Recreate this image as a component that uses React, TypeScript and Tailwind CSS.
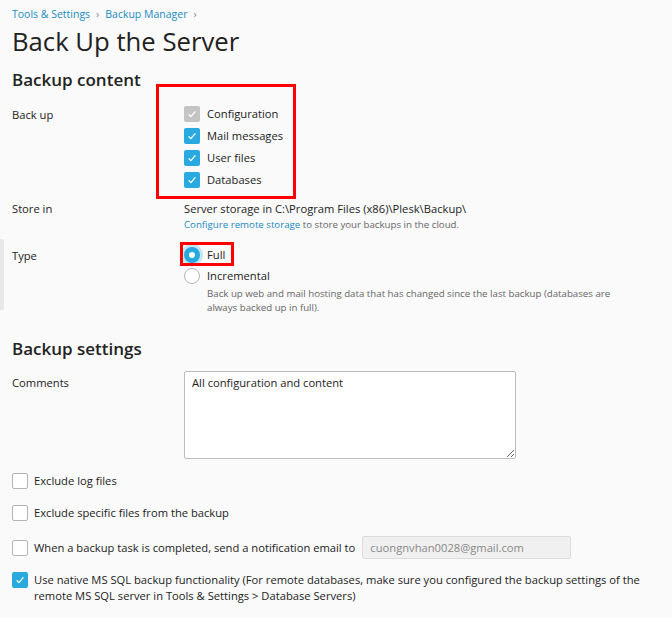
import React from "react";

function Check({ checked = false, disabled = false }: { checked?: boolean; disabled?: boolean }) {
  const base = "flex h-4 w-4 shrink-0 items-center justify-center rounded-[2px]";
  if (!checked) return <span className={`${base} border border-[#b5b5b5] bg-white`} />;
  return (
    <span className={`${base} ${disabled ? "bg-[#c4c4c4]" : "bg-[#28aae1]"}`}>
      <svg viewBox="0 0 16 16" className="h-3 w-3" fill="none" stroke="white" strokeWidth="1.8">
        <path d="M3.5 8.5l3 3 6-7" />
      </svg>
    </span>
  );
}

function Radio({ checked = false }: { checked?: boolean }) {
  if (checked)
    return (
      <span className="flex h-4 w-4 shrink-0 items-center justify-center rounded-full bg-[#28aae1] shadow-[0_0_0_3px_rgba(40,170,225,0.25)]">
        <span className="h-[6px] w-[6px] rounded-full bg-white" />
      </span>
    );
  return <span className="h-4 w-4 shrink-0 rounded-full border border-[#b5b5b5] bg-white" />;
}

export default function App() {
  return (
    <div className="min-h-[618px] bg-[#fafafa] pl-3 text-[11.2px] text-[#222] [font-family:'Open_Sans',sans-serif]">
      <div className="flex items-center gap-[6px] pt-[7px] text-[10.5px] text-[#1a8ac0]">
        <span>Tools &amp; Settings</span>
        <span className="text-[#888]">›</span>
        <span>Backup Manager</span>
        <span className="text-[#888]">›</span>
      </div>
      <h1 className="mt-[2px] text-[25.7px] leading-[34px] font-normal text-[#222]">Back Up the Server</h1>

      <h2 className="mt-[9px] text-[17px] leading-6 font-semibold">Backup content</h2>

      <div className="mt-[14px] flex">
        <div className="w-[172px] pt-[1px]">Back up</div>
        <div className="relative">
          <div className="pointer-events-none absolute -left-[28px] -top-[22px] h-[115px] w-[140px] border-[3px] border-[#f00]" />
          <div className="flex flex-col gap-[6px]">
            {[
              ["Configuration", true],
              ["Mail messages", false],
              ["User files", false],
              ["Databases", false],
            ].map(([l, d]) => (
              <label key={l as string} className="flex items-center gap-[7px] leading-4">
                <Check checked disabled={d as boolean} />
                <span>{l}</span>
              </label>
            ))}
          </div>
        </div>
      </div>

      <div className="mt-[13px] flex">
        <div className="w-[172px]">Store in</div>
        <div>
          <div>Server storage in C:\Program Files (x86)\Plesk\Backup\</div>
          <div className="text-[9.7px] text-[#666]">
            <span className="text-[#1a8ac0]">Configure remote storage</span> to store your backups in the cloud.
          </div>
        </div>
      </div>

      <div className="relative mt-[15px] flex">
        <div className="absolute -left-3 top-[-8px] h-[71px] w-[4px] rounded-r-[2px] bg-[#e8e8e8]" />
        <div className="w-[172px] pt-[1px]">Type</div>
        <div className="flex flex-col gap-[5px]">
          <div className="relative flex w-fit items-center gap-[7px] leading-4">
            <div className="pointer-events-none absolute -left-[4px] -top-[5px] h-[24px] w-[54px] border-[3px] border-[#f00]" />
            <Radio checked />
            <span>Full</span>
          </div>
          <div>
            <div className="flex items-center gap-[7px] leading-4">
              <Radio />
              <span>Incremental</span>
            </div>
            <div className="mt-[3px] w-[430px] pl-[23px] text-[9.7px] leading-[14px] text-[#666]">
              Back up web and mail hosting data that has changed since the last backup (databases are always backed up in full).
            </div>
          </div>
        </div>
      </div>

      <h2 className="mt-[22px] text-[17px] leading-6 font-semibold">Backup settings</h2>

      <div className="mt-[10px] flex">
        <div className="w-[172px] pt-[4px]">Comments</div>
        <textarea
          className="h-[88px] w-[332px] resize-y rounded-[2px] border border-[#bbb] bg-white px-[7px] py-[3px] text-[11.2px] text-[#222] outline-none"
          defaultValue="All configuration and content"
        />
      </div>

      <div className="mt-[14px] flex flex-col">
        <label className="flex items-center gap-[6px] leading-4">
          <Check />
          <span>Exclude log files</span>
        </label>
        <label className="mt-[16px] flex items-center gap-[6px] leading-4">
          <Check />
          <span>Exclude specific files from the backup</span>
        </label>
        <label className="mt-[15px] flex items-center gap-[6px] leading-4">
          <Check />
          <span>When a backup task is completed, send a notification email to</span>
          <span className="ml-[1px] flex h-[23px] w-[209px] items-center rounded-[2px] border border-[#dcdcdc] bg-[#f0f0f0] px-[7px] text-[#888]">
            cuongnvhan0028@gmail.com
          </span>
        </label>
        <label className="mt-[13px] flex items-start gap-[6px] leading-4">
          <Check checked />
          <span className="w-[630px]">
            Use native MS SQL backup functionality (For remote databases, make sure you configured the backup settings of the remote MS SQL server in Tools &amp; Settings &gt; Database Servers)
          </span>
        </label>
      </div>
    </div>
  );
}
